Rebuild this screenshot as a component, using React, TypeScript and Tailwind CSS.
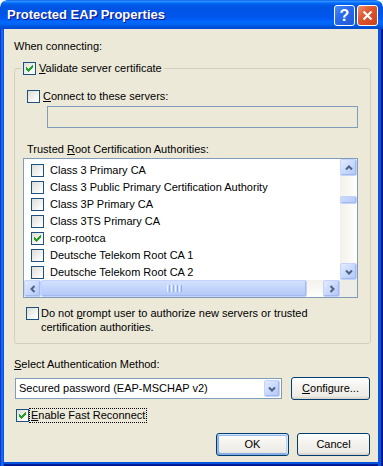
import React from "react";

function Check({ checked }: { checked?: boolean }) {
  return (
    <span className="flex h-[13px] w-[13px] shrink-0 items-center justify-center border border-[#1C5180] bg-[linear-gradient(135deg,#DCDCD7_0%,#FFFFFF_90%)]">
      {checked ? (
        <svg width="7" height="7" viewBox="0 0 7 7" shapeRendering="crispEdges">
          <polygon
            fill="#21A121"
            points="0,2 1,2 1,3 2,3 2,4 3,4 3,3 4,3 4,2 5,2 5,1 6,1 6,0 7,0 7,3 6,3 6,4 5,4 5,5 4,5 4,6 3,6 3,7 2,7 2,6 1,6 1,5 0,5"
          />
        </svg>
      ) : null}
    </span>
  );
}

function Chev({ dir, color = "#4D6185" }: { dir: "up" | "down" | "left" | "right"; color?: string }) {
  const pts = {
    up: "1,5.5 4,2.5 7,5.5",
    down: "1,2.5 4,5.5 7,2.5",
    left: "5.5,1 2.5,4 5.5,7",
    right: "2.5,1 5.5,4 2.5,7",
  }[dir];
  return (
    <svg width="8" height="8" viewBox="0 0 8 8">
      <polyline points={pts} fill="none" stroke={color} strokeWidth="2" />
    </svg>
  );
}

function ScrollBtn({ dir }: { dir: "up" | "down" | "left" | "right" }) {
  return (
    <span className="flex h-[17px] w-[17px] shrink-0 items-center justify-center rounded-[2px] border border-[#C3D3FD] bg-[linear-gradient(135deg,#E3EBFE_0%,#C6D7FC_55%,#B2C6F4_100%)] shadow-[inset_-1px_-1px_#A4BAEE]">
      <Chev dir={dir} />
    </span>
  );
}

function XPButton({ children, w, def }: { children: React.ReactNode; w: string; def?: boolean }) {
  return (
    <div
      className={
        "flex h-[23px] items-center justify-center rounded-[3px] border border-[#003C74] bg-[linear-gradient(180deg,#FFFFFF_0%,#F4F3EE_40%,#ECEBE6_86%,#D6D0C5_100%)] " +
        w +
        (def
          ? " shadow-[inset_-1px_1px_#CEE7FF,inset_1px_2px_#98B8EA,inset_-2px_2px_#BCD4F6,inset_1px_-1px_#89ADE4,inset_2px_-2px_#89ADE4]"
          : "")
      }
    >
      {children}
    </div>
  );
}

const rows: { label: string; checked?: boolean }[] = [
  { label: "Class 3 Primary CA" },
  { label: "Class 3 Public Primary Certification Authority" },
  { label: "Class 3P Primary CA" },
  { label: "Class 3TS Primary CA" },
  { label: "corp-rootca", checked: true },
  { label: "Deutsche Telekom Root CA 1" },
  { label: "Deutsche Telekom Root CA 2" },
];

export default function App() {
  return (
    <div className="flex h-[466px] w-[383px] flex-col overflow-hidden rounded-t-[7px] bg-white [font-family:'Liberation_Sans',Arial,sans-serif]">
      {/* Title bar */}
      <div className="flex h-[29px] shrink-0 items-start justify-between rounded-t-[7px] bg-[linear-gradient(180deg,#0058EE_0%,#3593FF_4%,#288EFF_6%,#127DFF_8%,#036FFC_10%,#0262EE_14%,#0057E5_20%,#0054E3_24%,#0055EB_56%,#005BF5_66%,#026AFE_76%,#0062EF_86%,#0052D6_92%,#0049D0_100%)] pl-[7px] pr-[5px]">
        <span className="pt-[7px] text-[13px] font-bold leading-[16px] text-white [text-shadow:1px_1px_#0F1089]">
          Protected EAP Properties
        </span>
        <div className="flex gap-[2px] pt-[5px]">
          <div className="flex h-[21px] w-[21px] items-center justify-center rounded-[3px] border border-white bg-[linear-gradient(135deg,#4A8CF8_0%,#2A6AEC_40%,#2159D6_100%)] text-[16px] font-bold leading-[16px] text-white">
            ?
          </div>
          <div className="flex h-[21px] w-[21px] items-center justify-center rounded-[3px] border border-white bg-[linear-gradient(135deg,#F0906C_0%,#E0572F_40%,#C8411B_100%)]">
            <svg width="11" height="11" viewBox="0 0 11 11">
              <path d="M1.5 1.5 L9.5 9.5 M9.5 1.5 L1.5 9.5" stroke="white" strokeWidth="2.2" />
            </svg>
          </div>
        </div>
      </div>

      {/* Body with frame */}
      <div className="flex flex-1 flex-col bg-[#ECE9D8] pb-[4px] pl-[4px] pr-[5px] shadow-[inset_1px_0_#0831D9,inset_3px_0_#166AEE,inset_4px_0_#0855DD,inset_-1px_0_#00138C,inset_-2px_0_#001EA0,inset_-5px_0_#0855DD,inset_0_-1px_#00138C,inset_0_-2px_#001EA0,inset_0_-4px_#0855DD]">
        <div className="flex flex-1 flex-col text-[11px] leading-[13px] text-black">
          <div className="ml-[10px] mt-[11px]">When connecting:</div>

          <fieldset className="ml-[10px] mt-[9px] w-[357px] rounded-[3px] border border-[#D0D0BF] pb-[9px]">
            <legend className="ml-[6px] px-[2px]">
              <span className="flex items-center gap-[3px]">
                <Check checked />
                <span>
                  <u>V</u>alidate server certificate
                </span>
              </span>
            </legend>

            <div className="mt-[15px] flex items-center gap-[3px] pl-[12px]">
              <Check />
              <span>
                <u>C</u>onnect to these servers:
              </span>
            </div>

            <div className="ml-[32px] mt-[3px] h-[22px] w-[311px] border border-[#7F9DB9] bg-[#ECE9D8]" />

            <div className="mt-[15px] pl-[12px]">
              Trusted <u>R</u>oot Certification Authorities:
            </div>

            <div className="ml-[8px] mt-[2px] flex h-[140px] w-[335px] flex-col border border-[#7F9DB9] bg-white">
              <div className="flex min-h-0 flex-1">
                <div className="min-w-0 flex-1 overflow-hidden pt-[3px]">
                  {rows.map((r) => (
                    <div key={r.label} className="flex h-[17px] items-center gap-[6px] whitespace-nowrap pl-[7px]">
                      <Check checked={r.checked} />
                      <span>{r.label}</span>
                    </div>
                  ))}
                </div>
                <div className="flex w-[17px] shrink-0 flex-col bg-[linear-gradient(90deg,#F3F1EC_0%,#FEFEFB_100%)]">
                  <ScrollBtn dir="up" />
                  <div className="h-[20px]" />
                  <div className="h-[8px] rounded-[2px] border border-[#C3D3FD] bg-[linear-gradient(90deg,#C9D9FC,#B8CCF7)] shadow-[inset_-1px_-1px_#A4BAEE]" />
                  <div className="flex-1" />
                  <ScrollBtn dir="down" />
                </div>
              </div>
              <div className="flex h-[17px] shrink-0">
                <div className="flex flex-1 bg-[linear-gradient(180deg,#F3F1EC_0%,#FEFEFB_100%)]">
                  <ScrollBtn dir="left" />
                  <div className="flex h-[17px] w-[266px] items-center justify-center gap-[1px] rounded-[2px] border border-[#C3D3FD] bg-[linear-gradient(180deg,#D4E1FD_0%,#C2D4FB_50%,#B4C8F6_100%)] shadow-[inset_-1px_-1px_#A4BAEE]">
                    <span className="h-[7px] w-[1px] bg-[#EEF4FE]" />
                    <span className="h-[7px] w-[1px] bg-[#8CB0F8]" />
                    <span className="h-[7px] w-[1px] bg-[#EEF4FE]" />
                    <span className="h-[7px] w-[1px] bg-[#8CB0F8]" />
                    <span className="h-[7px] w-[1px] bg-[#EEF4FE]" />
                    <span className="h-[7px] w-[1px] bg-[#8CB0F8]" />
                    <span className="h-[7px] w-[1px] bg-[#EEF4FE]" />
                    <span className="h-[7px] w-[1px] bg-[#8CB0F8]" />
                  </div>
                  <div className="flex-1" />
                  <ScrollBtn dir="right" />
                </div>
                <div className="w-[17px] shrink-0 bg-[#EEEDE5]" />
              </div>
            </div>

            <div className="mt-[8px] flex items-start gap-[2px] pl-[11px]">
              <span className="mt-[1px]">
                <Check />
              </span>
              <span className="leading-[14px]">
                Do not <u>p</u>rompt user to authorize new servers or trusted
                <br />
                certification authorities.
              </span>
            </div>
          </fieldset>

          <div className="ml-[10px] mt-[14px]">
            <u>S</u>elect Authentication Method:
          </div>

          <div className="ml-[11px] mt-[6px] flex items-center">
            <div className="flex h-[21px] w-[267px] items-center border border-[#7F9DB9] bg-white">
              <span className="flex-1 whitespace-nowrap pl-[3px]">Secured password (EAP-MSCHAP v2)</span>
              <span className="mr-[1px] flex h-[17px] w-[16px] items-center justify-center rounded-[2px] border border-[#C3D3FD] bg-[linear-gradient(135deg,#E3EBFE_0%,#C6D7FC_55%,#B2C6F4_100%)] shadow-[inset_-1px_-1px_#A4BAEE]">
                <Chev dir="down" />
              </span>
            </div>
            <div className="ml-[9px]">
              <XPButton w="w-[79px]">
                <span>
                  <u>C</u>onfigure...
                </span>
              </XPButton>
            </div>
          </div>

          <div className="ml-[12px] mt-[8px] flex items-center">
            <Check checked />
            <span className="border border-dotted border-black px-[1px] leading-[13px]">
              <u>E</u>nable Fast Reconnect
            </span>
          </div>

          <div className="mt-[10px] flex justify-end gap-[8px] pr-[8px]">
            <XPButton w="w-[73px]" def>
              OK
            </XPButton>
            <XPButton w="w-[73px]">Cancel</XPButton>
          </div>
        </div>
      </div>
    </div>
  );
}
